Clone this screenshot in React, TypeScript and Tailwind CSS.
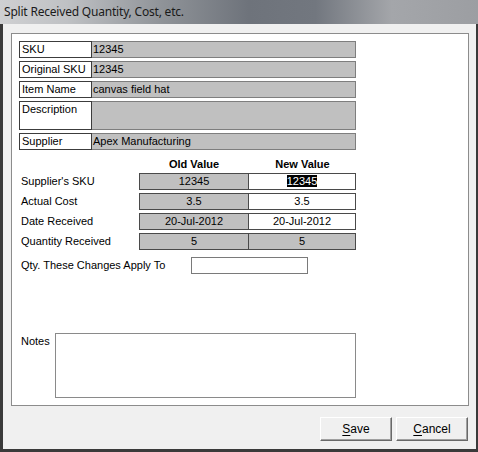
const font = { fontFamily: '"Liberation Sans", Arial, sans-serif' };

function InfoRow({ label, value, tall }: { label: string; value: string; tall?: boolean }) {
  const h = tall ? "h-[29px]" : "h-[17px]";
  return (
    <div className="flex">
      <div className={`${h} w-[73px] border border-[#3c3c3c] bg-white pl-[2px] leading-[15px]`}>{label}</div>
      <div className={`${h} w-[264px] border border-l-0 border-[#7e7e7e] bg-[#c0c0c0] pl-[1px] leading-[15px]`}>{value}</div>
    </div>
  );
}

function ValueRow({
  label,
  oldValue,
  newValue,
  newEditable = true,
  selected,
}: {
  label: string;
  oldValue: string;
  newValue: string;
  newEditable?: boolean;
  selected?: boolean;
}) {
  return (
    <div className="flex items-center">
      <div className="w-[120px] pl-[2px]">{label}</div>
      <div className="h-[17px] w-[110px] border border-[#4a4a4a] bg-[#c0c0c0] text-center leading-[15px]">{oldValue}</div>
      <div
        className={`h-[17px] w-[107px] border border-l-0 border-[#4a4a4a] text-center leading-[15px] ${
          newEditable ? "bg-white" : "bg-[#c0c0c0]"
        }`}
      >
        {selected ? <span className="inline-block bg-black leading-[12px] text-white">{newValue}</span> : newValue}
      </div>
    </div>
  );
}

function DialogButton({ hotkey, rest }: { hotkey: string; rest: string }) {
  return (
    <button className="h-[24px] w-[72px] border border-t-white border-l-white border-r-[#696969] border-b-[#696969] bg-[#f0f0f0] text-[12px] text-black shadow-[inset_-1px_-1px_0_#a0a0a0]">
      <span className="underline underline-offset-[2px]">{hotkey}</span>
      {rest}
    </button>
  );
}

export default function App() {
  return (
    <div className="flex h-[452px] w-[478px] flex-col bg-[#f0f0f0] text-[11px] text-black" style={font}>
      <div className="flex h-[24px] items-center bg-[linear-gradient(to_right,#cfd0d2_0%,#bfc1c4_14%,#8f9398_34%,#6e737b_52%,#72777f_66%,#a4a6aa_82%,#9c9ea2_100%)] pl-[4px] text-[12px] tracking-[-0.2px] text-[#1a1a1a]">
        <span style={{ fontFamily: '"Noto Sans", "Open Sans", sans-serif' }}>Split Received Quantity, Cost, etc.</span>
      </div>
      <div className="flex flex-1 flex-col border-l-[3px] border-r-[2px] border-b-[3px] border-[#3a3a3a] pl-[8px] pr-[7px] pt-[9px]">
        <div className="flex h-[373px] flex-col border border-[#8c8c8c] bg-white pl-[7px] pt-[7px]">
          <div className="flex flex-col gap-[3px]">
            <InfoRow label="SKU" value="12345" />
            <InfoRow label="Original SKU" value="12345" />
            <InfoRow label="Item Name" value="canvas field hat" />
            <InfoRow label="Description" value="" tall />
            <InfoRow label="Supplier" value="Apex Manufacturing" />
          </div>

          <div className="mt-[8px] flex h-[13px] font-bold leading-[13px]">
            <div className="w-[120px]" />
            <div className="w-[110px] text-center">Old Value</div>
            <div className="w-[107px] text-center">New Value</div>
          </div>

          <div className="mt-[2px] flex flex-col gap-[3px]">
            <ValueRow label="Supplier's SKU" oldValue="12345" newValue="12345" selected />
            <ValueRow label="Actual Cost" oldValue="3.5" newValue="3.5" />
            <ValueRow label="Date Received" oldValue="20-Jul-2012" newValue="20-Jul-2012" />
            <ValueRow label="Quantity Received" oldValue="5" newValue="5" newEditable={false} />
          </div>

          <div className="mt-[7px] flex items-center">
            <div className="w-[172px] pl-[2px]">Qty. These Changes Apply To</div>
            <div className="h-[17px] w-[117px] border border-[#7a7a7a] bg-white" />
          </div>

          <div className="mt-[59px] flex">
            <div className="w-[36px] pl-[2px] pt-[2px] leading-[13px]">Notes</div>
            <div className="h-[65px] w-[301px] border border-[#8a8a8a] bg-white" />
          </div>
        </div>

        <div className="mt-[11px] flex justify-end gap-[4px] pr-[1px]">
          <DialogButton hotkey="S" rest="ave" />
          <DialogButton hotkey="C" rest="ancel" />
        </div>
      </div>
    </div>
  );
}
